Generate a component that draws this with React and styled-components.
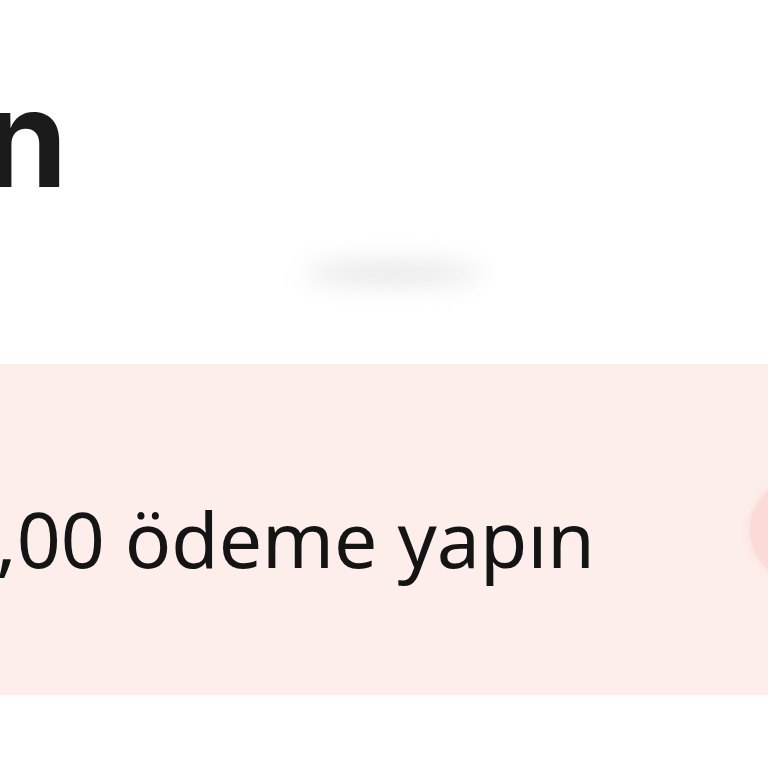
import React from 'react';
import styled, { createGlobalStyle } from 'styled-components';

const GlobalStyle = createGlobalStyle`
    html, body {
        margin: 0;
        padding: 0;
        background: #fff;
    }
    body {
        font-family: "Noto Sans", "Open Sans", sans-serif;
        overflow: hidden;
    }
`

const Page = styled.div`
    width: 768px;
    height: 768px;
    overflow: hidden;
    display: flex;
    flex-direction: column;
    background: #fff;
`

const Header = styled.div`
    height: 364px;
    display: flex;
    flex-direction: column;
`

const Title = styled.h1`
    margin: 70px 0 0 -17px;
    height: 136px;
    font-family: Inter, "Noto Sans", sans-serif;
    font-weight: 700;
    font-size: 136px;
    line-height: 136px;
    color: #1b1b1b;
`

const ShadowWrap = styled.div`
    display: flex;
    justify-content: center;
    padding-top: 58px;
    padding-left: 18px;
`

const Shadow = styled.div`
    width: 180px;
    height: 18px;
    border-radius: 50%;
    background: #e0e0e0;
    filter: blur(13px);
`

const PayBand = styled.div`
    height: 331px;
    background: #fdeeeb;
    display: flex;
    align-items: center;
    justify-content: space-between;
    overflow: hidden;
`

const PayText = styled.span`
    font-size: 77px;
    font-weight: 400;
    color: #141414;
    padding-top: 18px;
    margin-left: -4px;
    white-space: nowrap;
`

const RoundButton = styled.div`
    width: 102px;
    height: 102px;
    flex-shrink: 0;
    border-radius: 50%;
    background: #fcdad8;
    box-shadow: 0 0 8px rgba(240, 180, 180, 0.35);
    margin-right: -84px;
`

const App = () => {
    return (
        <>
            <GlobalStyle />
            <Page>
                <Header>
                    <Title>n</Title>
                    <ShadowWrap><Shadow /></ShadowWrap>
                </Header>
                <PayBand>
                    <PayText>,00 ödeme yapın</PayText>
                    <RoundButton />
                </PayBand>
            </Page>
        </>
    )
}

export default App;
